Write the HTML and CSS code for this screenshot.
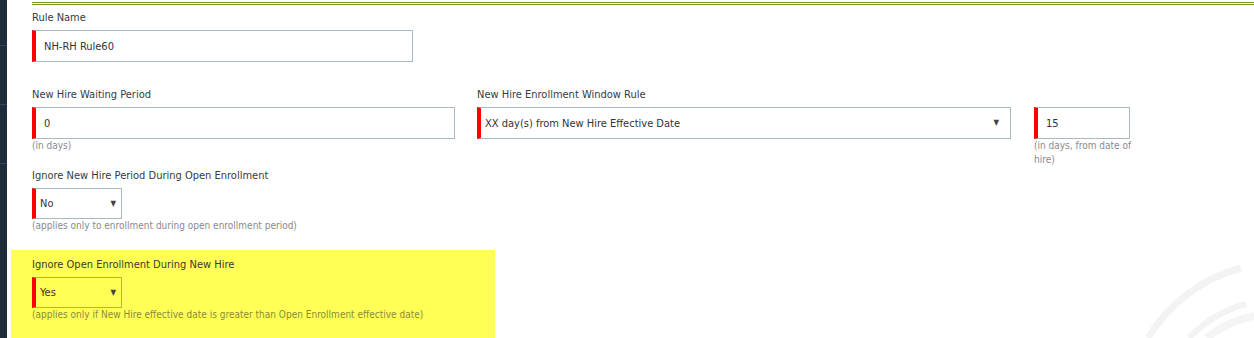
FILE: index.html
```html
<!DOCTYPE html>
<html>
<head>
<meta charset="utf-8">
<link rel="stylesheet" href="styles.css">
</head>
<body>
<div class="page">
  <aside class="sidebar">
    <div class="sb-item sb-first"></div>
    <div class="sb-item"></div>
    <div class="sb-item"></div>
  </aside>
  <main class="content">
    <div class="rule-line"></div>

    <div class="field f-name">
      <div class="lbl">Rule Name</div>
      <div class="ctl input req w-name">NH-RH Rule60</div>
    </div>

    <div class="row">
      <div class="field f-wait">
        <div class="lbl">New Hire Waiting Period</div>
        <div class="ctl input req w-wait">0</div>
        <div class="help">(in days)</div>
      </div>
      <div class="field f-window">
        <div class="lbl">New Hire Enrollment Window Rule</div>
        <div class="ctl select req w-window">XX day(s) from New Hire Effective Date<span class="arrow arrow-wide">&#9660;</span></div>
      </div>
      <div class="field f-days">
        <div class="lbl">&nbsp;</div>
        <div class="ctl input req w-days">15</div>
        <div class="help">(in days, from date of hire)</div>
      </div>
    </div>

    <div class="field f-ignore">
      <div class="lbl">Ignore New Hire Period During Open Enrollment</div>
      <div class="ctl select req w-small">No<span class="arrow">&#9660;</span></div>
      <div class="help">(applies only to enrollment during open enrollment period)</div>
    </div>

    <div class="highlight">
      <div class="field">
        <div class="lbl">Ignore Open Enrollment During New Hire</div>
        <div class="ctl select req w-small">Yes<span class="arrow">&#9660;</span></div>
        <div class="help">(applies only if New Hire effective date is greater than Open Enrollment effective date)</div>
      </div>
    </div>
  </main>
  <svg class="watermark" width="160" height="100" viewBox="1094 238 160 100" aria-hidden="true">
    <g fill="none">
      <path d="M 1148 338 A 155 155 0 0 1 1241 268" stroke="#f3f3f3" stroke-width="7"/>
      <path d="M 1189 338 A 122 122 0 0 1 1246 304" stroke="#f3f3f3" stroke-width="6"/>
      <path d="M 1207 338 A 106 106 0 0 1 1254 316" stroke="#f5f5f5" stroke-width="8"/>
    </g>
  </svg>
</div>
</body>
</html>
```

FILE: styles.css
```css
* { box-sizing: border-box; }
html, body {
  margin: 0;
  padding: 0;
  background: #ffffff;
}
body {
  font-family: "DejaVu Sans Condensed", "DejaVu Sans", sans-serif;
  font-size: 11px;
  color: #333b45;
  width: 1254px;
  height: 338px;
  overflow: hidden;
}
.page {
  position: relative;
  display: flex;
  height: 338px;
}
.sidebar {
  width: 7px;
  flex: 0 0 7px;
  background: #1e2b3b;
  display: flex;
  flex-direction: column;
}
.sb-item {
  height: 59px;
  border-bottom: 1px solid #34445a;
}
.sb-first { height: 46px; }

.content {
  flex: 1;
  padding-left: 25px;
  position: relative;
}
.rule-line {
  margin-top: 2px;
  height: 3px;
  border-top: 3px double #6f9a22;
}

.field { display: flex; flex-direction: column; align-items: flex-start; }
.lbl {
  height: 16px;
  line-height: 16px;
  padding-top: 1px;
  margin-bottom: 5px;
  color: #333b45;
  white-space: nowrap;
}
.f-name { margin-top: 4px; margin-bottom: 24px; }

.ctl {
  height: 32px;
  border: 1px solid #a9b8c1;
  border-left: 4px solid #ff0000;
  display: flex;
  align-items: center;
  position: relative;
  color: #333;
}
.input { padding-left: 8px; }
.select { padding-left: 4px; }
.w-name { width: 381px; }
.w-wait { width: 423px; }
.w-window { width: 534px; }
.w-days { width: 96px; }
.w-small { width: 90px; height: 32px; }

.arrow {
  position: absolute;
  right: 5px;
  top: 50%;
  transform: translateY(-50%);
  font-size: 8px;
  color: #444;
  line-height: 1;
}
.arrow-wide { right: 11px; }

.help {
  color: #8a8a8a;
  line-height: 14px;
  font-size: 10px;
}
.row { display: flex; align-items: flex-start; }
.f-wait { width: 445px; }
.f-window { width: 557px; }
.f-days { width: 110px; }
.f-days .help { width: 100px; }

.f-ignore .select { height: 31px; }

.highlight {
  margin-top: 17px;
  margin-left: -21px;
  width: 484px;
  height: 100px;
  background: #ffff55;
  padding: 6px 0 0 21px;
}
.highlight .select {
  border-color: #b3b34a;
  border-left-color: #ff0000;
  background: transparent;
  height: 31px;
}
.highlight .help { color: #8c8c38; }
.highlight .lbl { color: #3a3a2a; }

.watermark {
  position: absolute;
  right: 0;
  bottom: 0;
}
```
